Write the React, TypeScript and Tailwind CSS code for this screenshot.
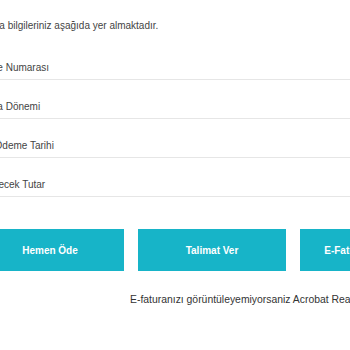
import React from "react";

const rows = ["Abone Numarası", "Fatura Dönemi", "Son Ödeme Tarihi", "Ödenecek Tutar"];
const buttons = ["Hemen Öde", "Talimat Ver", "E-Faturayı Görüntüle"];

function App() {
  return (
    <div className="w-[350px] h-[350px] overflow-hidden bg-white font-['Liberation_Sans',Arial,sans-serif]">
      <div className="w-[640px] -ml-[24px]">
        {/* info text */}
        <p className="pt-[18px] mb-[7px] text-[10px] leading-[16px] text-[#444]">
          Fatura bilgileriniz aşağıda yer almaktadır.
        </p>

        {/* detail rows */}
        <div className="flex flex-col -ml-[2px]">
          {rows.map((label) => (
            <div
              key={label}
              className="pt-[19px] pb-[3px] border-b border-[#e6e6e6] text-[10px] leading-[16px] text-[#444]"
            >
              {label}
            </div>
          ))}
        </div>

        {/* actions */}
        <div className="flex gap-[14px] mt-[32px]">
          {buttons.map((b) => (
            <button
              key={b}
              className="w-[148px] h-[42px] bg-[#17b4c8] text-white text-[10px] font-bold"
            >
              {b}
            </button>
          ))}
        </div>

        <p className="mt-[21px] pl-[154px] text-[10.4px] leading-[16px] text-[#333] whitespace-nowrap">
          E-faturanızı görüntüleyemiyorsaniz Acrobat Reader programını yükleyebilirsiniz.
        </p>
      </div>
    </div>
  );
}

export default App;
